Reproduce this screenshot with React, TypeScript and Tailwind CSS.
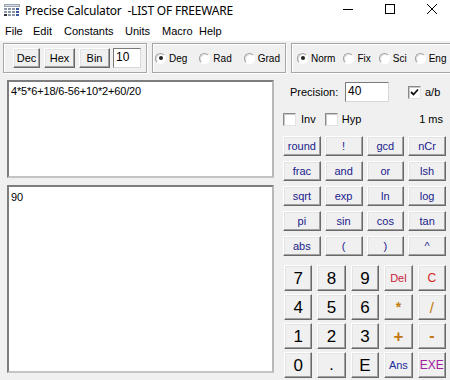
import React from "react";

const Btn = ({ children, className = "" }: { children?: React.ReactNode; className?: string }) => (
  <div
    className={`flex items-center justify-center bg-[#f0f0f0] border border-t-white border-l-white border-r-[#696969] border-b-[#696969] shadow-[inset_-1px_-1px_0_#a0a0a0,inset_1px_1px_0_#e3e3e3] leading-none ${className}`}
  >
    {children}
  </div>
);

const Radio = ({ on = false }: { on?: boolean }) => (
  <span className="w-[11px] h-[11px] shrink-0 rounded-full border border-[#a0a0a0] border-b-white border-r-white bg-white flex items-center justify-center shadow-[inset_1px_1px_0_#e3e3e3]">
    {on && <span className="w-[4px] h-[4px] rounded-full bg-[#222]" />}
  </span>
);

const Check = ({ on = false }: { on?: boolean }) => (
  <span className="w-[13px] h-[13px] bg-white border border-[#8a8a8a] border-b-[#e3e3e3] border-r-[#e3e3e3] shadow-[inset_1px_1px_0_#c8c8c8] flex items-center justify-center">
    {on && (
      <svg width="9" height="9" viewBox="0 0 9 9">
        <path d="M1 4 L3.5 6.5 L8 1.5" stroke="#111" strokeWidth="1.8" fill="none" />
      </svg>
    )}
  </span>
);

const Group = ({ children, className = "" }: { children: React.ReactNode; className?: string }) => (
  <div
    className={`h-[30px] shrink-0 border border-[#a6a6a6] shadow-[inset_1px_1px_0_#ffffff,1px_1px_0_#ffffff] flex items-center ${className}`}
  >
    {children}
  </div>
);

const RadioItem = ({ label, on = false }: { label: string; on?: boolean }) => (
  <div className="flex items-center gap-[3px] shrink-0">
    <Radio on={on} />
    <span className="text-[10px] text-black whitespace-nowrap">{label}</span>
  </div>
);

const funcs = ["round", "!", "gcd", "nCr", "frac", "and", "or", "lsh", "sqrt", "exp", "ln", "log", "pi", "sin", "cos", "tan", "abs", "(", ")", "^"];

type Key = { t: string; c: string; s: string };
const pad: Key[] = [
  { t: "7", c: "text-black", s: "text-[17px]" },
  { t: "8", c: "text-black", s: "text-[17px]" },
  { t: "9", c: "text-black", s: "text-[17px]" },
  { t: "Del", c: "text-[#c8203c]", s: "text-[11px]" },
  { t: "C", c: "text-[#d42020]", s: "text-[12px]" },
  { t: "4", c: "text-black", s: "text-[17px]" },
  { t: "5", c: "text-black", s: "text-[17px]" },
  { t: "6", c: "text-black", s: "text-[17px]" },
  { t: "*", c: "text-[#c08010]", s: "text-[14px] font-bold" },
  { t: "/", c: "text-[#c07810]", s: "text-[15px]" },
  { t: "1", c: "text-black", s: "text-[17px]" },
  { t: "2", c: "text-black", s: "text-[17px]" },
  { t: "3", c: "text-black", s: "text-[17px]" },
  { t: "+", c: "text-[#c07810]", s: "text-[17px] font-bold" },
  { t: "-", c: "text-[#c07810]", s: "text-[16px] font-bold" },
  { t: "0", c: "text-black", s: "text-[17px]" },
  { t: ".", c: "text-black", s: "text-[16px]" },
  { t: "E", c: "text-black", s: "text-[17px]" },
  { t: "Ans", c: "text-[#1c2e9c]", s: "text-[11px]" },
  { t: "EXE", c: "text-[#a020a0]", s: "text-[12px]" },
];

export default function App() {
  return (
    <div
      className="w-[450px] h-[380px] bg-[#f0f0f0] overflow-hidden text-black"
      style={{ fontFamily: '"Liberation Sans", Arial, sans-serif' }}
    >
      {/* Title bar */}
      <div className="h-[21px] bg-white flex items-center relative" style={{ fontFamily: '"Noto Sans", "Open Sans", sans-serif' }}>
        <svg className="ml-[4px]" width="16" height="13" viewBox="0 0 16 13">
          <rect x="0" y="0" width="16" height="3" fill="#9aa4b4" />
          <rect x="1" y="1" width="14" height="1" fill="#d8dde6" />
          {[0, 1, 2].map((r) =>
            [0, 1, 2, 3].map((c) => (
              <rect
                key={`${r}-${c}`}
                x={c * 4}
                y={4 + r * 3}
                width="3"
                height="2"
                fill={c === 3 ? "#3a5a9a" : r === 2 && c === 0 ? "#333" : "#8c96a6"}
              />
            ))
          )}
        </svg>
        <span className="ml-[5px] text-[12px] leading-none whitespace-pre tracking-[-0.2px]">Precise Calculator  -LIST OF FREEWARE</span>
        <div className="absolute left-[343px] top-[9px] w-[10px] h-[1px] bg-black" />
        <div className="absolute left-[385px] top-[4px] w-[10px] h-[10px] border border-black" />
        <svg className="absolute left-[427px] top-[4px]" width="10" height="10" viewBox="0 0 10 10">
          <path d="M0 0 L10 10 M10 0 L0 10" stroke="#000" strokeWidth="1" />
        </svg>
      </div>

      {/* Menu bar */}
      <div className="h-[20px] bg-white flex items-center text-[11px] leading-none pl-[5px]">
        <span className="w-[28px] shrink-0">File</span>
        <span className="w-[31px] shrink-0">Edit</span>
        <span className="w-[61px] shrink-0">Constants</span>
        <span className="w-[37px] shrink-0">Units</span>
        <span className="w-[37px] shrink-0">Macro</span>
        <span>Help</span>
      </div>

      {/* Toolbar */}
      <div className="flex pt-[2px] pl-[3px] gap-[5px]">
        <Group className="w-[144px] pl-[9px]">
          <Btn className="w-[27px] h-[20px] text-[11px]">Dec</Btn>
          <Btn className="w-[31px] h-[20px] text-[11px] ml-[4px]">Hex</Btn>
          <Btn className="w-[31px] h-[20px] text-[11px] ml-[4px]">Bin</Btn>
          <div className="w-[28px] h-[20px] ml-[3px] bg-white border border-[#7a7a7a] border-b-[#d8d8d8] border-r-[#d8d8d8] text-[12px] leading-none pl-[2px] pt-[2px]">10</div>
        </Group>
        <Group className="w-[134px] pl-[2px] gap-[12px]">
          <RadioItem label="Deg" on />
          <RadioItem label="Rad" />
          <RadioItem label="Grad" />
        </Group>
        <Group className="w-[162px] pl-[5px] gap-[8px]">
          <RadioItem label="Norm" on />
          <RadioItem label="Fix" />
          <RadioItem label="Sci" />
          <RadioItem label="Eng" />
        </Group>
      </div>

      {/* Main */}
      <div className="flex mt-[7px]">
        <div className="ml-[7px] w-[267px] flex flex-col gap-[7px]">
          <div className="h-[98px] bg-white border-2 border-t-[#7d7d7d] border-l-[#7d7d7d] border-r-[#b8b8b8] border-b-[#c4c4c4] pl-[2px] pt-[4px] text-[11px] leading-none tracking-[-0.15px]">
            4*5*6+18/6-56+10*2+60/20
          </div>
          <div className="h-[188px] bg-white border-2 border-t-[#7d7d7d] border-l-[#7d7d7d] border-r-[#b8b8b8] border-b-[#c4c4c4] pl-[2px] pt-[5px] text-[11px] leading-none">
            90
          </div>
        </div>

        <div className="ml-[9px] w-[163px] flex flex-col">
          {/* Precision row */}
          <div className="h-[20px] mt-[2px] flex items-center">
            <span className="w-[62px] pl-[7px] text-[11px]">Precision:</span>
            <div className="w-[44px] h-[20px] bg-white border border-[#7a7a7a] border-b-[#d8d8d8] border-r-[#d8d8d8] text-[12px] leading-none pl-[2px] pt-[2px]">40</div>
            <div className="ml-[19px] flex items-center gap-[4px]">
              <Check on />
              <span className="text-[11px]">a/b</span>
            </div>
          </div>
          {/* Inv/Hyp row */}
          <div className="h-[13px] mt-[11px] flex items-center">
            <Check />
            <span className="ml-[5px] text-[11px]">Inv</span>
            <span className="ml-[9px]"><Check /></span>
            <span className="ml-[4px] text-[11px]">Hyp</span>
            <span className="ml-auto mr-[3px] text-[11px]">1 ms</span>
          </div>
          {/* Function grid */}
          <div className="grid grid-cols-4 gap-x-[4px] gap-y-[5px] mt-[10px]">
            {funcs.map((f) => (
              <Btn key={f} className="h-[20px] text-[11px] text-[#1a1a8c]">{f}</Btn>
            ))}
          </div>
          {/* Number pad */}
          <div className="grid grid-cols-5 gap-x-[5px] gap-y-[3px] mt-[9px] pl-[1px]">
            {pad.map((k) => (
              <Btn key={k.t} className={`h-[26px] ${k.c} ${k.s}`}>{k.t}</Btn>
            ))}
          </div>
        </div>
      </div>
    </div>
  );
}
